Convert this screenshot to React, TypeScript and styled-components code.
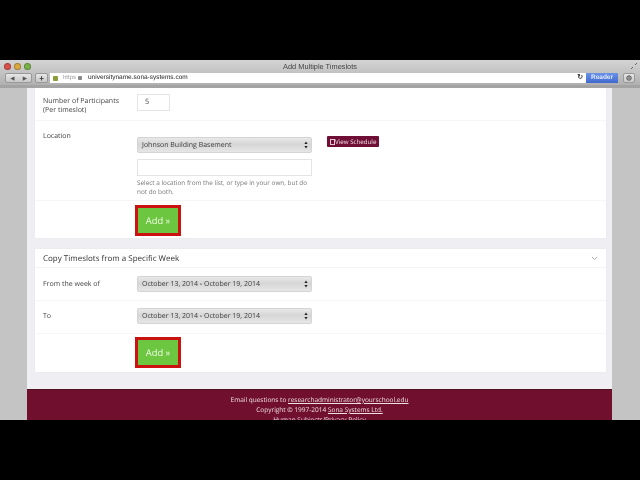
import React from "react";
import styled, { createGlobalStyle } from "styled-components";

const Global = createGlobalStyle`
  html, body { margin: 0; padding: 0; background: #000; }
  body { font-family: "Open Sans", "Liberation Sans", sans-serif; text-rendering: geometricPrecision; }
`;
const Screen = styled.div`
  width: 640px; height: 480px; background: #000; overflow: hidden;
  display: flex; flex-direction: column; padding: 60px 0; box-sizing: border-box;
  filter: blur(0.3px);
`;
const TitleBar = styled.div`
  height: 13px; flex: none; display: flex; align-items: center; position: relative;
  background: linear-gradient(#d4d4d4, #c2c2c2);
  padding-left: 4px; gap: 3px;
`;
const Light = styled.span<{ $c: string }>`
  width: 5px; height: 5px; border-radius: 50%; background: ${p => p.$c}; border: 0.5px solid rgba(0,0,0,.25);
`;
const Title = styled.div`
  position: absolute; left: 0; right: 0; top: 0; text-align: center;
  font: 7.4px/13px "Liberation Sans", sans-serif; color: #444;
`;
const Resize = styled.svg`
  position: absolute; right: 2px; top: 2px; width: 8px; height: 8px;
`;
const Toolbar = styled.div`
  height: 12px; flex: none; display: flex; align-items: flex-start; padding: 0 5px;
  background: linear-gradient(#c2c2c2, #b0b0b0); box-sizing: border-box;
`;
const NavGroup = styled.div`
  width: 27px; height: 10px; flex: none; display: flex; background: linear-gradient(#e6e6e6, #c8c8c8);
  border-radius: 2px; border: 0.5px solid #999; box-sizing: border-box;
  font-size: 5.5px; line-height: 9px; text-align: center; color: #555; justify-content: space-around;
`;
const ToolBtn = styled.div`
  width: 13px; height: 10px; flex: none; margin: 0 2px 0 3px; background: linear-gradient(#e6e6e6, #c8c8c8);
  border-radius: 2px; border: 0.5px solid #999; box-sizing: border-box;
  font: bold 8px/9px "Liberation Sans", sans-serif; text-align: center; color: #333;
`;
const Address = styled.div`
  flex: 1; height: 10px; background: #fff; display: flex; align-items: center;
  padding: 0 3px; font: 6.5px/10px "Liberation Sans", sans-serif; color: #222;
`;
const Fav = styled.span`
  width: 5px; height: 5px; background: #8f9a3a; border-radius: 1px; margin-right: 5px; flex: none;
`;
const Proto = styled.span` color: #999; width: 15px; flex: none; font-size: 6px; `;
const Lock = styled.span` width: 4px; height: 4px; background: #888; border-radius: 1px; margin-right: 6px; flex: none; `;
const Reload = styled.span` margin-left: auto; font-size: 7px; color: #444; font-weight: bold; `;
const Reader = styled.div`
  width: 32px; height: 10px; flex: none; background: linear-gradient(#6c92e6, #3f69cf); color: #dfe8ff;
  font: bold 6.5px/10px "Liberation Sans", sans-serif; text-align: center;
`;
const Share = styled.div`
  width: 12px; height: 10px; flex: none; margin: 0 0 0 5px; background: linear-gradient(#e6e6e6, #c8c8c8);
  border-radius: 2px; border: 0.5px solid #999; box-sizing: border-box;
  display: flex; align-items: center; justify-content: center;
`;
const ChromeEdge = styled.div` height: 3px; flex: none; background: #a3a3a3; `;
const Viewport = styled.div`
  flex: 1; min-height: 0; overflow: hidden; display: flex; background: #c4c4c4;
`;
const Gutter = styled.div<{ $w: number }>` width: ${p => p.$w}px; flex: none; background: #c4c4c4; `;
const Page = styled.div`
  flex: 1; min-width: 0; background: #eeeef3; display: flex; flex-direction: column;
`;
const Panel = styled.section`
  margin: 0 6px 0 8px; background: #fff; box-shadow: 0 0 2px rgba(0,0,0,.04); flex: none;
  & + & { margin-top: 11px; }
`;
const Row = styled.div<{ $h: number }>`
  height: ${p => p.$h}px; box-sizing: border-box; display: grid; grid-template-columns: 94px 175px auto;
  padding-left: 8px; border-bottom: 1px solid #f6f6f6; font-size: 7px; line-height: 9px; color: #444;
  &:last-child { border-bottom: 0; }
`;
const Label = styled.div<{ $t: number }>` padding-top: ${p => p.$t}px; `;
const Field = styled.div<{ $t: number }>` padding-top: ${p => p.$t}px; display: flex; flex-direction: column; `;
const NumberBox = styled.div`
  width: 33px; height: 17px; box-sizing: border-box; border: 1px solid #e4e4e4; padding-left: 7px;
  font-size: 7.4px; line-height: 15px; color: #444;
`;
const SelectBox = styled.div`
  width: 175px; height: 16px; flex: none; box-sizing: border-box; padding: 0 3px 0 4px; border-radius: 2px;
  background: linear-gradient(#e9e9e9, #d6d6d6 45%, #e6e6e6); border: 1px solid #d4d4d4;
  display: flex; align-items: center; justify-content: space-between;
  font-size: 7px; color: #3d3d3d;
`;
const TextBox = styled.div`
  width: 175px; height: 17px; flex: none; margin-top: 6px; box-sizing: border-box; border: 1px solid #e4e4e4;
`;
const Help = styled.div`
  margin-top: 2px; font-size: 6.4px; line-height: 9px; color: #777; width: 175px;
`;
const ScheduleBtn = styled.div`
  margin: 15px 0 0 15px; width: 52px; height: 11px; background: #6f0f35; color: #f0dfe5; border-radius: 1px;
  font-size: 6.2px; line-height: 11px; white-space: nowrap; display: flex; align-items: center; padding-left: 3px; box-sizing: border-box;
`;
const Glyph = styled.span`
  width: 3px; height: 4px; border: 0.5px solid #e6c6d2; flex: none;
`;
const AddOutline = styled.div`
  width: 46px; height: 31px; margin-left: -2px; box-sizing: border-box; border: 3px solid #cc1111; background: #6cc63f;
  color: #eef9e2; font-size: 9.4px; line-height: 25px; text-align: center;
`;
const PanelHead = styled.div`
  height: 19px; box-sizing: border-box; padding: 0 8px; display: flex; align-items: center; justify-content: space-between;
  font-size: 8px; color: #333; border-bottom: 1px solid #f4f4f4;
`;
const Footer = styled.footer`
  margin-top: 17px; flex: 1; background: #710f2f; border-top: 1px solid #4f0f1f; color: #eee0e4;
  font-size: 6.5px; line-height: 10px; text-align: center; padding-top: 5px; overflow: hidden;
`;
const FootLink = styled.span` text-decoration: underline; `;
const Arrows = () => (
  <svg width="4" height="8" viewBox="0 0 4 8"><path d="M2 0.5 L3.6 3 H.4 Z M2 7.5 L3.6 5 H.4 Z" fill="#222" /></svg>
);

export default function App() {
  return (
    <Screen>
      <Global />
      <TitleBar>
        <Light $c="#d9524a" /><Light $c="#dba93c" /><Light $c="#79b347" />
        <Title>Add Multiple Timeslots</Title>
        <Resize viewBox="0 0 8 8"><path d="M1 7 L3 5 M5 3 L7 1" stroke="#666" fill="none" /></Resize>
      </TitleBar>
      <Toolbar>
        <NavGroup><span>◀</span><span>▶</span></NavGroup>
        <ToolBtn>+</ToolBtn>
        <Address>
          <Fav /><Proto>https</Proto><Lock /><span>universityname.sona-systems.com</span>
          <Reload>↻</Reload>
        </Address>
        <Reader>Reader</Reader>
        <Share>
          <svg width="6" height="6" viewBox="0 0 6 6"><circle cx="3" cy="3" r="2.2" fill="none" stroke="#444" /><path d="M3 1.5V4" stroke="#444" /></svg>
        </Share>
      </Toolbar>
      <ChromeEdge />
      <Viewport>
        <Gutter $w={27} />
        <Page>
          <Panel>
            <Row $h={33}>
              <Label $t={9}>Number of Participants<br />(Per timeslot)</Label>
              <Field $t={6}><NumberBox>5</NumberBox></Field>
            </Row>
            <Row $h={80}>
              <Label $t={11}>Location</Label>
              <Field $t={16}>
                <SelectBox>Johnson Building Basement<Arrows /></SelectBox>
                <TextBox />
                <Help>Select a location from the list, or type in your own, but do not do both.</Help>
              </Field>
              <ScheduleBtn><Glyph />View Schedule</ScheduleBtn>
            </Row>
            <Row $h={37}>
              <div />
              <Field $t={4}><AddOutline>Add »</AddOutline></Field>
            </Row>
          </Panel>
          <Panel>
            <PanelHead>
              Copy Timeslots from a Specific Week
              <svg width="7" height="5" viewBox="0 0 7 5"><path d="M1 1 L3.5 3.5 L6 1" fill="none" stroke="#aaa" /></svg>
            </PanelHead>
            <Row $h={33}>
              <Label $t={12}>From the week of</Label>
              <Field $t={8}><SelectBox>October 13, 2014 - October 19, 2014<Arrows /></SelectBox></Field>
            </Row>
            <Row $h={33}>
              <Label $t={11}>To</Label>
              <Field $t={7}><SelectBox>October 13, 2014 - October 19, 2014<Arrows /></SelectBox></Field>
            </Row>
            <Row $h={38}>
              <div />
              <Field $t={3}><AddOutline>Add »</AddOutline></Field>
            </Row>
          </Panel>
          <Footer>
            Email questions to <FootLink>researchadministrator@yourschool.edu</FootLink><br />
            Copyright © 1997-2014 <FootLink>Sona Systems Ltd.</FootLink><br />
            <FootLink>Human Subjects/Privacy Policy</FootLink>
          </Footer>
        </Page>
        <Gutter $w={28} />
      </Viewport>
    </Screen>
  );
}
